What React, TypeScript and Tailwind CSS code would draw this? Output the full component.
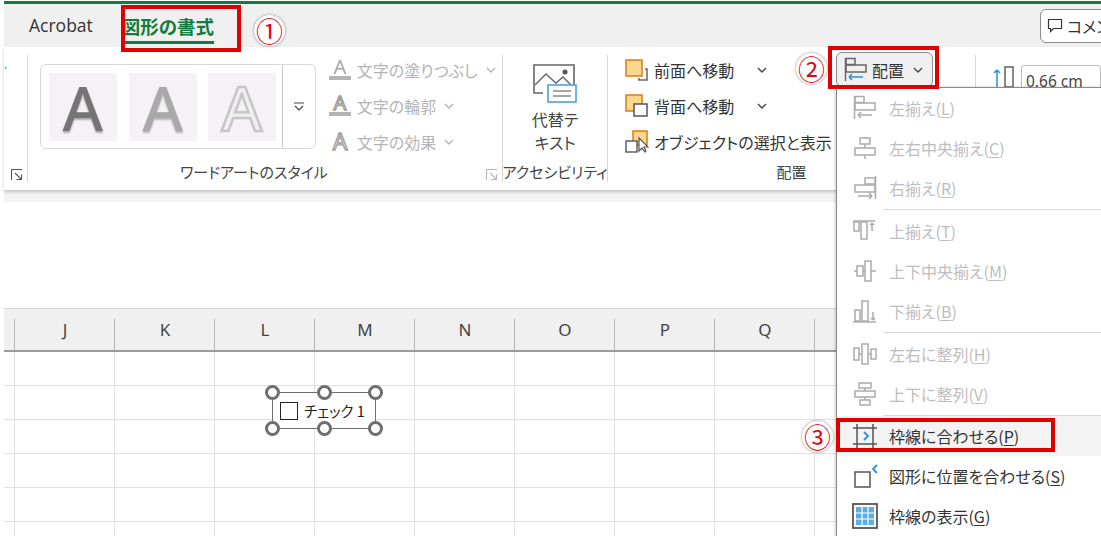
import React from "react";

const JP = "font-['Noto_Sans_CJK_JP','Noto_Sans',sans-serif] [font-feature-settings:'palt']";
const COLS = ["J", "K", "L", "M", "N", "O", "P", "Q", "R"];
const GRAY = "#ababab";

function Svg({ size = 26, children, stroke = GRAY }: { size?: number; children: React.ReactNode; stroke?: string }) {
  return (
    <svg width={size} height={size} viewBox={`0 0 ${size} ${size}`} fill="none" stroke={stroke} strokeWidth="1.5" className="shrink-0">
      {children}
    </svg>
  );
}

function Chevron({ color = "#444" }: { color?: string }) {
  return (
    <svg width="10" height="6" viewBox="0 0 10 6" fill="none" stroke={color} strokeWidth="1.4" className="shrink-0">
      <path d="M1 1l4 4 4-4" />
    </svg>
  );
}

function Launcher({ color = "#555" }: { color?: string }) {
  return (
    <svg width="12" height="12" viewBox="0 0 12 12" fill="none" stroke={color} strokeWidth="1.1">
      <path d="M.5 11V.5H11M4 4l6.5 6.5M10.5 5.5v5h-5" />
    </svg>
  );
}

function Badge({ n }: { n: string }) {
  return (
    <span className={`absolute flex h-[31px] w-[31px] items-center justify-center rounded-full bg-white text-[27px] leading-none text-[#e60012] shadow-[0_0_3px_rgba(0,0,0,0.45)] ${JP}`}>
      {n}
    </span>
  );
}

function TextFxRow({ icon, label }: { icon: React.ReactNode; label: string }) {
  return (
    <div className="flex h-9 items-center">
      {icon}
      <span className={`ml-[5px] text-[16px] text-[#b4b4b4] ${JP}`}>{label}</span>
      <span className="ml-2">
        <Chevron color="#b4b4b4" />
      </span>
    </div>
  );
}

function FxIcon({ bar, outline }: { bar: boolean; outline: boolean }) {
  return (
    <svg width="24" height="26" viewBox="0 0 24 26" fill="none" className="shrink-0">
      <text x="12" y={bar ? 17 : 21} textAnchor="middle" fontSize={bar ? 20 : 23} fontFamily="Noto Sans" fill={outline ? "#fff" : "#a8a8a8"} stroke={outline ? "#a0a0a0" : "none"} strokeWidth={outline ? 1.4 : 0}>
        A
      </text>
      {bar && <rect x="1" y="19" width="22" height="4" fill="#b4b4b4" />}
    </svg>
  );
}

function StyleSwatch({ className }: { className: string }) {
  return (
    <div className="flex h-[68px] w-[68px] items-center justify-center bg-[#f5f1f6]">
      <span className={`font-['Noto_Sans',sans-serif] text-[62px] font-medium leading-none ${className}`}>A</span>
    </div>
  );
}

function ImageAltIcon() {
  return (
    <svg width="46" height="42" viewBox="0 0 46 42" fill="none" className="shrink-0">
      <path d="M11 30H2V2h40v22" stroke="#666" strokeWidth="1.6" />
      <path d="M3 22l11-11 10 9 7-6 9 9" stroke="#666" strokeWidth="1.4" />
      <circle cx="33" cy="9" r="2.5" fill="#555" />
      <rect x="16" y="22" width="28" height="17" fill="#fff" stroke="#4aa3e0" strokeWidth="1.6" />
      <path d="M21 28h18M21 33h18" stroke="#888" strokeWidth="1.5" />
    </svg>
  );
}

function FrontIcon() {
  return (
    <svg width="24" height="24" viewBox="0 0 24 24" fill="none" className="shrink-0">
      <path d="M14 20v2h8V11h-2" stroke="#666" strokeWidth="1.5" />
      <rect x="1" y="2" width="16" height="16" fill="#fbd88f" stroke="#e07a10" strokeWidth="1.5" />
    </svg>
  );
}

function BackIcon() {
  return (
    <svg width="24" height="24" viewBox="0 0 24 24" fill="none" className="shrink-0">
      <rect x="1" y="1" width="16" height="16" fill="#fbd88f" stroke="#e07a10" strokeWidth="1.5" />
      <rect x="9" y="10" width="13" height="12" fill="#fff" stroke="#555" strokeWidth="1.5" />
    </svg>
  );
}

function SelectionIcon() {
  return (
    <svg width="24" height="24" viewBox="0 0 24 24" fill="none" className="shrink-0">
      <rect x="8" y="1" width="14" height="14" fill="#fbd88f" stroke="#e07a10" strokeWidth="1.5" />
      <rect x="1" y="11" width="11" height="11" fill="#fff" stroke="#555" strokeWidth="1.4" />
      <path d="M14 8v13l3-3 3 4 1-1-2-4h4z" fill="#fff" stroke="#555" strokeWidth="1.2" />
    </svg>
  );
}

function MoveRow({ icon, label, chevron }: { icon: React.ReactNode; label: string; chevron?: boolean }) {
  return (
    <div className="flex h-9 items-center">
      {icon}
      <span className={`ml-[5px] whitespace-nowrap text-[16px] text-[#333] ${JP}`}>{label}</span>
      {chevron && (
        <span className="ml-[23px]">
          <Chevron />
        </span>
      )}
    </div>
  );
}

function AlignLeftIcon({ arrow = GRAY, stroke = GRAY }: { arrow?: string; stroke?: string }) {
  return (
    <Svg stroke={stroke}>
      <path d="M2.5 1v23" />
      <rect x="3" y="1.5" width="9" height="6" />
      <rect x="3" y="8" width="20" height="7" />
      <path d="M6 20h14M6 20l3-3M6 20l3 3" stroke={arrow} />
    </Svg>
  );
}

const menuIcons: Record<string, React.ReactNode> = {
  center: (
    <Svg>
      <path d="M13 2v22" />
      <rect x="8" y="3" width="10" height="6" fill="#fff" />
      <rect x="3" y="13" width="20" height="7" fill="#fff" />
    </Svg>
  ),
  right: (
    <Svg>
      <path d="M23.5 1v23" />
      <rect x="13" y="3" width="10" height="6" />
      <rect x="3" y="10" width="20" height="7" />
      <path d="M6 21h14M20 21l-3-3M20 21l-3 3" />
    </Svg>
  ),
  top: (
    <Svg>
      <path d="M1 3h22" />
      <rect x="2" y="4" width="5" height="9" />
      <rect x="9" y="4" width="6" height="17" />
      <path d="M20 13V5M20 5l-2 2M20 5l2 2" />
    </Svg>
  ),
  middle: (
    <Svg>
      <path d="M2 13h22" />
      <rect x="5" y="8" width="6" height="10" fill="#fff" />
      <rect x="13" y="3" width="6" height="20" fill="#fff" />
    </Svg>
  ),
  bottom: (
    <Svg>
      <path d="M1 24h23" />
      <rect x="3" y="12" width="5" height="11" />
      <rect x="10" y="3" width="6" height="20" />
      <path d="M21 14v8M21 22l-2-2M21 22l2-2" />
    </Svg>
  ),
  hdist: (
    <Svg>
      <path d="M2 13h22" />
      <rect x="2" y="7" width="5" height="12" fill="#fff" />
      <rect x="10" y="3" width="6" height="20" fill="#fff" />
      <rect x="19" y="8" width="5" height="10" fill="#fff" />
    </Svg>
  ),
  vdist: (
    <Svg>
      <path d="M13 2v22" />
      <rect x="7" y="2" width="12" height="5" fill="#fff" />
      <rect x="3" y="10" width="20" height="6" fill="#fff" />
      <rect x="8" y="19" width="10" height="5" fill="#fff" />
    </Svg>
  ),
  snapGrid: (
    <Svg stroke="#555">
      <path d="M1 5h24M1 21h24M5 1v24M21 1v24" />
      <path d="M12 9l4 4-4 4" stroke="#2f8fdc" strokeWidth="1.8" />
    </Svg>
  ),
  snapShape: (
    <Svg stroke="#555">
      <rect x="3" y="9" width="15" height="15" />
      <path d="M25 2l-4 4 4 4" stroke="#2f8fdc" strokeWidth="1.8" />
    </Svg>
  ),
  viewGrid: (
    <Svg stroke="#555">
      <rect x="1" y="1" width="24" height="24" strokeWidth="1.8" />
      <rect x="4" y="4" width="18" height="18" fill="#5aaee8" stroke="none" />
      <path d="M10 4v18M16 4v18M4 10h18M4 16h18" stroke="#fff" strokeWidth="1.2" />
    </Svg>
  ),
};

function MenuItem({ icon, label, hotkey, disabled, active }: { icon: React.ReactNode; label: string; hotkey: string; disabled?: boolean; active?: boolean }) {
  return (
    <div className={`flex h-10 items-center pl-[15px] ${active ? "bg-[#f3f3f3]" : ""}`}>
      {icon}
      <span className={`ml-[11px] whitespace-nowrap text-[16px] ${disabled ? "text-[#bdbdbd]" : "text-[#333]"} ${JP}`}>
        {label}(<span className="underline underline-offset-2">{hotkey}</span>)
      </span>
    </div>
  );
}

function MenuSep({ h }: { h: string }) {
  return (
    <div className={`ml-[46px] flex items-center ${h}`}>
      <div className="h-px w-full bg-[#d8d8d8]" />
    </div>
  );
}

function Handle({ pos }: { pos: string }) {
  return <span className={`absolute h-[15px] w-[15px] rounded-full border-[3px] border-[#6e6e6e] bg-white ${pos}`} />;
}

export default function App() {
  return (
    <div className="relative h-[536px] w-[1101px] overflow-hidden bg-white pl-1 pt-px">
      {/* title strip */}
      <div className="h-[3px] bg-[#107c41]" />

      {/* tabs */}
      <div className="flex h-[43px] items-center bg-[#f0f0f0]">
        <span className="ml-[25px] font-['Open_Sans',sans-serif] text-[17.5px] text-[#333]">Acrobat</span>
        <div className="relative ml-[29px] flex h-full flex-col items-center justify-center">
          <span className={`text-[18.5px] font-bold leading-[26px] text-[#107c41] ${JP}`}>図形の書式</span>
          <span className="absolute bottom-[3px] left-0 right-0 h-[3px] bg-[#107c41]" />
        </div>
        <div className="ml-auto mr-[-40px] flex h-[34px] w-[101px] shrink-0 items-center rounded-[6px] border border-[#8c8c8c] bg-white pl-[6px]">
          <svg width="16" height="16" viewBox="0 0 16 16" fill="none" stroke="#333" strokeWidth="1.2" className="shrink-0">
            <path d="M1.5 1.5h13v9h-8l-3 3v-3h-2z" />
          </svg>
          <span className={`ml-1 whitespace-nowrap text-[16px] text-[#333] ${JP}`}>コメント</span>
        </div>
      </div>

      {/* ribbon */}
      <div className="relative z-10 flex h-[143px] bg-white shadow-[0_2px_3px_rgba(0,0,0,0.2)]">
        <div className="flex w-[24px] flex-col justify-between border-r border-[#d6d6d6] mb-2 mt-2">
          <span className="ml-px mt-[11px] text-[9px] leading-none text-[#333]">&#x2C8;</span>
          <span className="ml-[7px] mb-[1px]">
            <Launcher />
          </span>
        </div>

        {/* word art */}
        <div className="relative mb-2 mt-2 w-[478px] border-r border-[#d6d6d6] pl-3 pt-[9px]">
          <div className="flex">
            <div className="flex h-[85px] w-[276px] items-center rounded-[6px] border border-[#d8d8d8] pl-2">
              <StyleSwatch className="text-[#757575] [text-shadow:0_2px_2px_rgba(0,0,0,0.3)]" />
              <span className="ml-3" />
              <StyleSwatch className="text-[#a9a9a9] [text-shadow:0_2px_2px_rgba(0,0,0,0.25)]" />
              <span className="ml-[11px]" />
              <StyleSwatch className="text-[#efefef] [-webkit-text-stroke:2.5px_#c6c6c6]" />
              <div className="ml-[6px] flex h-full flex-1 items-center justify-center border-l border-[#c8c8c8]">
                <svg width="10" height="9" viewBox="0 0 10 9" fill="none" stroke="#444" strokeWidth="1.2">
                  <path d="M0 1h10M1 4l4 4 4-4" />
                </svg>
              </div>
            </div>
            <div className="-mt-[12px] ml-[12px] flex flex-col">
              <TextFxRow icon={<FxIcon bar outline={false} />} label="文字の塗りつぶし" />
              <TextFxRow icon={<FxIcon bar outline />} label="文字の輪郭" />
              <TextFxRow icon={<FxIcon bar={false} outline />} label="文字の効果" />
            </div>
          </div>
          <div className={`absolute bottom-0 left-0 right-[-2px] text-center text-[15px] leading-[20px] text-[#444] pr-[24px] ${JP}`}>ワードアートのスタイル</div>
          <span className="absolute bottom-[1px] right-[4px] leading-none">
            <Launcher color="#b5b5b5" />
          </span>
        </div>

        {/* accessibility */}
        <div className="mb-2 mt-2 flex w-[105px] flex-col items-center border-r border-[#d6d6d6]">
          <div className="mt-2">
            <ImageAltIcon />
          </div>
          <div className={`mt-[3px] text-center text-[16px] leading-[23px] text-[#444] ${JP}`}>
            代替テ
            <br />
            キスト
          </div>
          <div className={`mt-auto whitespace-nowrap text-[15px] leading-[20px] text-[#444] ${JP}`}>アクセシビリティ</div>
        </div>

        {/* arrange */}
        <div className="relative mb-2 mt-2 w-[370px] border-r border-[#d6d6d6] pl-[17px]">
          <div className="-mt-[3px] flex flex-col">
            <MoveRow icon={<FrontIcon />} label="前面へ移動" chevron />
            <MoveRow icon={<BackIcon />} label="背面へ移動" chevron />
            <MoveRow icon={<SelectionIcon />} label="オブジェクトの選択と表示" />
          </div>
          <div className={`absolute bottom-0 left-0 right-0 text-center text-[15px] leading-[20px] text-[#444] ${JP}`}>配置</div>
        </div>

        {/* size */}
        <div className="ml-[17px] mt-[18px] flex h-[30px] items-start">
          <svg width="25" height="24" viewBox="0 0 25 24" fill="none" className="shrink-0">
            <path d="M4 22V5M4 5L1 8M4 5l3 3" stroke="#2f8fdc" strokeWidth="1.5" />
            <rect x="12" y="2" width="8" height="20" stroke="#555" strokeWidth="1.4" />
          </svg>
          <div className="ml-[3px] flex h-[34px] w-[80px] items-center rounded-[3px] border border-[#bcbcbc] pl-[4px] font-['Noto_Sans',sans-serif] text-[15.5px] whitespace-nowrap text-[#444]">0.66 cm</div>
        </div>
      </div>

      {/* formula bar area, hidden behind the ribbon */}
      <div className="h-3 bg-[#f3f3f3]" />
      <div className="h-[107px] border-b border-[#d4d4d4] bg-white" />

      {/* column headers */}
      <div className="grid h-[43px] grid-cols-[11px_repeat(9,100px)] border-b-2 border-[#9a9a9a] bg-[#f0f0f0]">
        <div className="mt-[10px] border-r border-[#b5b5b5]" />
        {COLS.map((c) => (
          <div key={c} className="relative flex items-center justify-center font-['Noto_Sans',sans-serif] text-[17px] text-[#444]">
            {c}
            <span className="absolute bottom-0 right-0 top-[10px] w-px bg-[#b5b5b5]" />
          </div>
        ))}
      </div>

      {/* cells */}
      <div className="grid auto-rows-[34px] grid-cols-[11px_repeat(9,100px)]">
        {Array.from({ length: 60 }).map((_, i) => (
          <div key={i} className="border-b border-r border-[#e1e1e1]" />
        ))}
      </div>

      {/* selected check box */}
      <div className="absolute left-[272px] top-[392px] flex h-[37px] w-[104px] items-center border border-[#6e6e6e] bg-white pl-[7px]">
        <span className="h-[18px] w-[18px] border border-[#222]" />
        <span className={`ml-[6px] text-[14.5px] text-[#222] ${JP}`}>チェック 1</span>
        <Handle pos="-left-2 -top-2" />
        <Handle pos="left-[44px] -top-2" />
        <Handle pos="-right-2 -top-2" />
        <Handle pos="-left-2 -bottom-2" />
        <Handle pos="left-[44px] -bottom-2" />
        <Handle pos="-right-2 -bottom-2" />
      </div>

      {/* arrange button */}
      <div className="absolute left-[836px] top-[52px] z-20 flex h-[35px] w-[97px] items-center rounded-[6px] border border-[#8c8c8c] bg-[#f0f0f0] pl-[6px]">
        <AlignLeftIcon arrow="#2f8fdc" stroke="#666" />
        <span className={`ml-[3px] text-[16px] text-[#333] ${JP}`}>配置</span>
        <span className="ml-[9px]">
          <Chevron />
        </span>
      </div>

      {/* arrange menu */}
      <div className="absolute left-[836px] top-[87px] z-20 h-[460px] w-[280px] rounded-bl-[6px] border border-[#8a8a8a] bg-white shadow-[-1px_0_3px_rgba(0,0,0,0.2)]">
        <MenuItem disabled icon={<AlignLeftIcon />} label="左揃え" hotkey="L" />
        <MenuItem disabled icon={menuIcons.center} label="左右中央揃え" hotkey="C" />
        <MenuItem disabled icon={menuIcons.right} label="右揃え" hotkey="R" />
        <MenuSep h="h-[3px]" />
        <MenuItem disabled icon={menuIcons.top} label="上揃え" hotkey="T" />
        <MenuItem disabled icon={menuIcons.middle} label="上下中央揃え" hotkey="M" />
        <MenuItem disabled icon={menuIcons.bottom} label="下揃え" hotkey="B" />
        <MenuSep h="h-[3px]" />
        <MenuItem disabled icon={menuIcons.hdist} label="左右に整列" hotkey="H" />
        <MenuItem disabled icon={menuIcons.vdist} label="上下に整列" hotkey="V" />
        <MenuSep h="h-[2px]" />
        <MenuItem active icon={menuIcons.snapGrid} label="枠線に合わせる" hotkey="P" />
        <MenuItem icon={menuIcons.snapShape} label="図形に位置を合わせる" hotkey="S" />
        <MenuItem icon={menuIcons.viewGrid} label="枠線の表示" hotkey="G" />
      </div>

      {/* callouts */}
      <div className="absolute left-[121px] top-[5px] z-30 h-[47px] w-[120px] border-[4px] border-[#e00000]" />
      <div className="absolute left-[828px] top-[46px] z-30 h-[43px] w-[111px] border-[4px] border-[#e00000]" />
      <div className="absolute left-[836px] top-[418px] z-30 h-[34px] w-[219px] border-[4px] border-[#e00000]" />
      <div className="absolute left-[254px] top-[15px] z-30 h-[31px] w-[31px]">
        <Badge n="①" />
      </div>
      <div className="absolute left-[796px] top-[53px] z-30 h-[31px] w-[31px]">
        <Badge n="②" />
      </div>
      <div className="absolute left-[802px] top-[421px] z-30 h-[31px] w-[31px]">
        <Badge n="③" />
      </div>
    </div>
  );
}
